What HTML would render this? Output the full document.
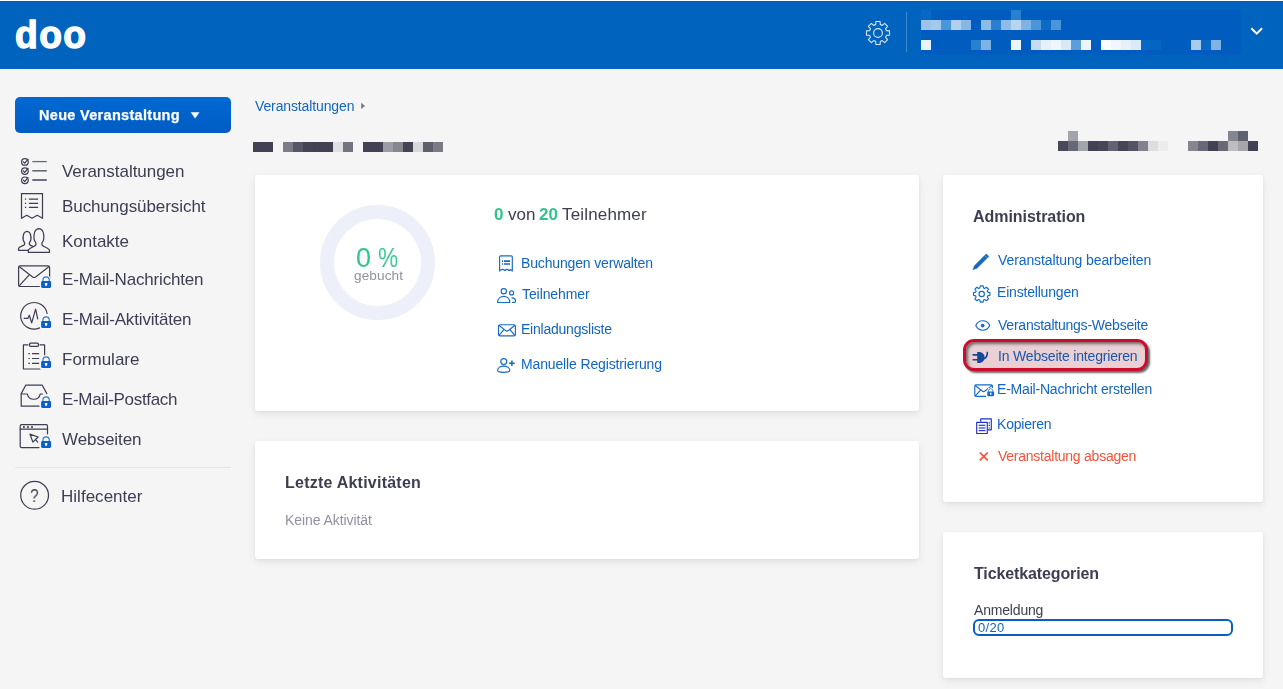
<!DOCTYPE html>
<html lang="de"><head><meta charset="utf-8"><title>doo</title>
<style>
*{box-sizing:border-box;margin:0;padding:0}
html,body{width:1283px;height:689px;overflow:hidden}
body{background:#f5f5f5;font-family:"Liberation Sans",Arial,sans-serif;position:relative}
.t{position:absolute;white-space:nowrap;line-height:20px;display:block;will-change:transform}
.abs{position:absolute}
h2.t{font-size:16px;margin:0}
a.t{text-decoration:none;cursor:pointer}
svg{position:absolute;overflow:visible}
.hdr{position:absolute;left:0;top:1px;width:1283px;height:68px;background:#0063bd;border-top:1px solid #0059b5}
.topline{position:absolute;left:0;top:0;width:1283px;height:1px;background:#fff}
.card{position:absolute;background:#fff;border-radius:3px;box-shadow:0 3px 9px rgba(0,0,0,.08),0 1px 3px rgba(0,0,0,.04)}
.btn{position:absolute;left:15px;top:97px;width:216px;height:36px;border-radius:5px;background:linear-gradient(#0069d2,#005cc3)}
.px{position:absolute;width:10px;height:10px}
.logo{position:absolute;left:15px;top:5px;font-weight:700;font-size:39px;line-height:60px;color:#fff;-webkit-text-stroke:1.3px #fff;letter-spacing:1.5px;transform:scaleX(.955);transform-origin:0 0;display:block}
</style></head>
<body>
<header><div class="topline"></div><div class="hdr"></div><span class="logo">doo</span><svg style="left:864px;top:19px" width="28" height="28" viewBox="864 19 28 28" ><path d="M875.68 24.62L875.91 21.49L880.09 21.49L880.32 24.62A8.70 8.70 0 0 1 882.29 25.43L882.29 25.43L884.66 23.38L887.62 26.34L885.57 28.71A8.70 8.70 0 0 1 886.38 30.68L886.38 30.68L889.51 30.91L889.51 35.09L886.38 35.32A8.70 8.70 0 0 1 885.57 37.29L885.57 37.29L887.62 39.66L884.66 42.62L882.29 40.57A8.70 8.70 0 0 1 880.32 41.38L880.32 41.38L880.09 44.51L875.91 44.51L875.68 41.38A8.70 8.70 0 0 1 873.71 40.57L873.71 40.57L871.34 42.62L868.38 39.66L870.43 37.29A8.70 8.70 0 0 1 869.62 35.32L869.62 35.32L866.49 35.09L866.49 30.91L869.62 30.68A8.70 8.70 0 0 1 870.43 28.71L870.43 28.71L868.38 26.34L871.34 23.38L873.71 25.43A8.70 8.70 0 0 1 875.68 24.62Z" fill="none" stroke="#d9e8f7" stroke-width="1.1" stroke-linejoin="round"/><circle cx="878" cy="33" r="4.4" fill="none" stroke="#d9e8f7" stroke-width="1.1"/></svg><div class="abs" style="left:906px;top:12px;width:1px;height:40px;background:#3f88d0"></div><div class="abs" style="left:921px;top:10px;width:320px;height:45px;background:#005cbf"></div><i class="px" style="left:921px;top:10px;background:#0868c6"></i><i class="px" style="left:1011px;top:10px;background:#2a80d0"></i><i class="px" style="left:921px;top:20px;background:#9cc4ea"></i><i class="px" style="left:931px;top:20px;background:#a5c9eb"></i><i class="px" style="left:941px;top:20px;background:#4a96d8"></i><i class="px" style="left:951px;top:20px;background:#b0d0ee"></i><i class="px" style="left:961px;top:20px;background:#86b7e5"></i><i class="px" style="left:981px;top:20px;background:#8cbbe6"></i><i class="px" style="left:991px;top:20px;background:#2a80d0"></i><i class="px" style="left:1001px;top:20px;background:#8fbce7"></i><i class="px" style="left:1011px;top:20px;background:#b9d4ef"></i><i class="px" style="left:1021px;top:20px;background:#7fb3e3"></i><i class="px" style="left:1031px;top:20px;background:#4a96d8"></i><i class="px" style="left:1041px;top:20px;background:#0a6ac6"></i><i class="px" style="left:1051px;top:20px;background:#4a96d8"></i><i class="px" style="left:921px;top:40px;background:#eaf2fa"></i><i class="px" style="left:971px;top:40px;background:#2a80d0"></i><i class="px" style="left:981px;top:40px;background:#7fb3e3"></i><i class="px" style="left:1011px;top:40px;background:#eef4fb"></i><i class="px" style="left:1031px;top:40px;background:#c5dcf1"></i><i class="px" style="left:1041px;top:40px;background:#e6f0f9"></i><i class="px" style="left:1051px;top:40px;background:#eef5fb"></i><i class="px" style="left:1061px;top:40px;background:#d9e8f6"></i><i class="px" style="left:1071px;top:40px;background:#5a9fdc"></i><i class="px" style="left:1081px;top:40px;background:#eef4fb"></i><i class="px" style="left:1101px;top:40px;background:#fbfdff"></i><i class="px" style="left:1111px;top:40px;background:#f0f6fc"></i><i class="px" style="left:1121px;top:40px;background:#e8f1fa"></i><i class="px" style="left:1131px;top:40px;background:#dceaf7"></i><i class="px" style="left:1141px;top:40px;background:#0868c6"></i><i class="px" style="left:1151px;top:40px;background:#0565c2"></i><i class="px" style="left:1191px;top:40px;background:#a8cbec"></i><i class="px" style="left:1201px;top:40px;background:#0868c6"></i><i class="px" style="left:1211px;top:40px;background:#7fb3e3"></i><svg style="left:1248px;top:24px" width="18" height="14" viewBox="1248 24 18 14" ><path d="M1251.3 28.3 L1256.7 33.7 L1262.1 28.3" fill="none" stroke="#fff" stroke-width="2" stroke-linecap="butt" stroke-linejoin="miter"/></svg>
</header>
<nav><div class="btn"></div><svg style="left:189px;top:110px" width="12" height="10" viewBox="189 110 12 10" ><path d="M190.7 112.2 H199.5 L195.1 118.4 Z" fill="#fff"/></svg><svg style="left:18px;top:155px" width="32" height="30" viewBox="18 155 32 30" ><circle cx="24.9" cy="161.9" r="3.3" fill="none" stroke="#3d3e52" stroke-width="1.22" stroke-linecap="round" stroke-linejoin="round" stroke-width="1.1"/><path d="M23.4 161.8 l1.3 1.4 l3.3 -3.9" fill="none" stroke="#3d3e52" stroke-width="1.22" stroke-linecap="round" stroke-linejoin="round" stroke-width="1.1"/><path d="M32.3 161.6 H46.8" fill="none" stroke="#6b6c7b" stroke-width="1.3"/><circle cx="24.9" cy="171.1" r="3.3" fill="none" stroke="#3d3e52" stroke-width="1.22" stroke-linecap="round" stroke-linejoin="round" stroke-width="1.1"/><path d="M23.4 171.0 l1.3 1.4 l3.3 -3.9" fill="none" stroke="#3d3e52" stroke-width="1.22" stroke-linecap="round" stroke-linejoin="round" stroke-width="1.1"/><path d="M32.3 170.8 H46.8" fill="none" stroke="#5e5f6f" stroke-width="1.5"/><circle cx="24.9" cy="180.3" r="3.3" fill="none" stroke="#3d3e52" stroke-width="1.22" stroke-linecap="round" stroke-linejoin="round" stroke-width="1.1"/><path d="M23.4 180.2 l1.3 1.4 l3.3 -3.9" fill="none" stroke="#3d3e52" stroke-width="1.22" stroke-linecap="round" stroke-linejoin="round" stroke-width="1.1"/><path d="M32.3 180.0 H46.8" fill="none" stroke="#55566a" stroke-width="1.7"/></svg><svg style="left:18px;top:190px" width="30" height="32" viewBox="18 190 30 32" ><path d="M21.5 193.6 H42.5 V218.3 L37.25 215.3 L32 218.3 L26.75 215.3 L21.5 218.3 Z" fill="none" stroke="#3d3e52" stroke-width="1.22" stroke-linecap="round" stroke-linejoin="round"/><path d="M28.9 199.2 H38.1 M24.9 199.2 H26.2" fill="none" stroke="#3d3e52" stroke-width="1.25"/><path d="M28.9 203.3 H38.1 M24.9 203.3 H26.2" fill="none" stroke="#3d3e52" stroke-width="1.25"/><path d="M28.9 207.3 H38.1 M24.9 207.3 H26.2" fill="none" stroke="#3d3e52" stroke-width="1.25"/></svg><svg style="left:16px;top:226px" width="36" height="30" viewBox="16 226 36 30" ><g fill="none" stroke="#3d3e52" stroke-width="1.22" stroke-linecap="round" stroke-linejoin="round"><path transform="translate(27 250.3) scale(0.8) translate(-38.9 -252.4)" stroke-width="1.6" d="M35.9 242.8 C32.8 239.6 33.2 228.9 38.9 228.7 C44.6 228.9 45 239.6 41.9 242.8 L41.9 244.8 C42.9 247.3 49.5 247.5 49.5 250.6 L49.5 252.4 L28.3 252.4 L28.3 250.6 C28.3 247.5 34.9 247.3 35.9 244.8 Z"/><path fill="#f5f5f5" d="M35.9 242.8 C32.8 239.6 33.2 228.9 38.9 228.7 C44.6 228.9 45 239.6 41.9 242.8 L41.9 244.8 C42.9 247.3 49.5 247.5 49.5 250.6 L49.5 252.4 L28.3 252.4 L28.3 250.6 C28.3 247.5 34.9 247.3 35.9 244.8 Z"/></g></svg><svg style="left:16px;top:263px" width="38" height="28" viewBox="16 263 38 28" ><rect x="18.6" y="265.9" width="31" height="20.6" rx="1.6" fill="none" stroke="#3d3e52" stroke-width="1.22" stroke-linecap="round" stroke-linejoin="round"/><path d="M19.4 266.8 L32.6 277 Q34.1 278 35.6 277 L48.8 266.8 M19.4 285.6 L28.8 275.4" fill="none" stroke="#3d3e52" stroke-width="1.22" stroke-linecap="round" stroke-linejoin="round"/><rect x="39.80" y="279.70" width="12.60" height="9.50" rx="2.20" fill="#f5f5f5"/><path d="M42.95 281.60 V280.00 A3.15 3.15 0 0 1 49.25 280.00 V281.60" fill="#f5f5f5" stroke="#f5f5f5" stroke-width="3.60"/><path d="M42.95 281.60 V280.00 A3.15 3.15 0 0 1 49.25 280.00 V281.60" fill="none" stroke="#2a78d2" stroke-width="1.15"/><rect x="41.10" y="281.00" width="10.00" height="6.90" rx="1.30" fill="#0a60c6"/><path d="M44.80 283.00 H47.40 L47.00 285.80 H45.20 Z" fill="#fff"/></svg><svg style="left:18px;top:300px" width="36" height="32" viewBox="18 300 36 32" ><path d="M47.1 313.5 A13.3 13.3 0 1 0 39.6 327.9" fill="none" stroke="#3d3e52" stroke-width="1.22" stroke-linecap="round" stroke-linejoin="round"/><path d="M24.2 318.4 H27.8 L29.3 315.3 L31.7 322.9 L35.6 309.2 L37.7 318.8" fill="none" stroke="#3d3e52" stroke-width="1.22" stroke-linecap="round" stroke-linejoin="round" stroke-width="1.15"/><path d="M42.95 321.60 V320.00 A3.15 3.15 0 0 1 49.25 320.00 V321.60" fill="none" stroke="#2a78d2" stroke-width="1.15"/><rect x="41.10" y="321.00" width="10.00" height="6.90" rx="1.30" fill="#0a60c6"/><path d="M44.80 323.00 H47.40 L47.00 325.80 H45.20 Z" fill="#fff"/></svg><svg style="left:20px;top:341px" width="34" height="32" viewBox="20 341 34 32" ><path d="M28 344.8 H23.4 V369 H40 M40 344.8 H44.6 V355.6" fill="none" stroke="#3d3e52" stroke-width="1.22" stroke-linecap="round" stroke-linejoin="round"/><rect x="29.6" y="343.2" width="8.8" height="3.2" rx="0.9" fill="none" stroke="#3d3e52" stroke-width="1.22" stroke-linecap="round" stroke-linejoin="round"/><path d="M32 353.6 H39.2 M28.4 353.6 H29.9" fill="none" stroke="#3d3e52" stroke-width="1.2"/><path d="M32 358.5 H39.2 M28.4 358.5 H29.9" fill="none" stroke="#3d3e52" stroke-width="1.2"/><path d="M32 363.4 H39.2 M28.4 363.4 H29.9" fill="none" stroke="#3d3e52" stroke-width="1.2"/><rect x="39.80" y="359.70" width="12.60" height="9.50" rx="2.20" fill="#f5f5f5"/><path d="M42.95 361.60 V360.00 A3.15 3.15 0 0 1 49.25 360.00 V361.60" fill="#f5f5f5" stroke="#f5f5f5" stroke-width="3.60"/><path d="M42.95 361.60 V360.00 A3.15 3.15 0 0 1 49.25 360.00 V361.60" fill="none" stroke="#2a78d2" stroke-width="1.15"/><rect x="41.10" y="361.00" width="10.00" height="6.90" rx="1.30" fill="#0a60c6"/><path d="M44.80 363.00 H47.40 L47.00 365.80 H45.20 Z" fill="#fff"/></svg><svg style="left:18px;top:383px" width="36" height="28" viewBox="18 383 36 28" ><path d="M46.8 393.6 L42.3 385.2 H25.7 L21.2 393.6 V406.2 H39" fill="none" stroke="#3d3e52" stroke-width="1.22" stroke-linecap="round" stroke-linejoin="round"/><path d="M21.2 394 H27.4 C28.6 401 39 401 40.2 394 H42.6" fill="none" stroke="#3d3e52" stroke-width="1.22" stroke-linecap="round" stroke-linejoin="round"/><path d="M42.95 401.60 V400.00 A3.15 3.15 0 0 1 49.25 400.00 V401.60" fill="none" stroke="#2a78d2" stroke-width="1.15"/><rect x="41.10" y="401.00" width="10.00" height="6.90" rx="1.30" fill="#0a60c6"/><path d="M44.80 403.00 H47.40 L47.00 405.80 H45.20 Z" fill="#fff"/></svg><svg style="left:18px;top:422px" width="36" height="30" viewBox="18 422 36 30" ><path d="M47.5 433.8 V426 Q47.5 424.6 46.1 424.6 H21.6 Q20.2 424.6 20.2 426 V446.2 Q20.2 447.6 21.6 447.6 H39" fill="none" stroke="#3d3e52" stroke-width="1.22" stroke-linecap="round" stroke-linejoin="round"/><path d="M20.2 429.2 H47.5" fill="none" stroke="#3d3e52" stroke-width="1.22" stroke-linecap="round" stroke-linejoin="round"/><rect x="23.0" y="426.1" width="1.8" height="1.8" rx="0.4" fill="#3d3e52"/><rect x="27.0" y="426.1" width="1.8" height="1.8" rx="0.4" fill="#3d3e52"/><rect x="31.1" y="426.1" width="1.8" height="1.8" rx="0.4" fill="#3d3e52"/><path d="M30 434.2 L38.1 437 L32.9 442.1 Z M35.6 439.6 L37.7 442.1" fill="none" stroke="#3d3e52" stroke-width="1.22" stroke-linecap="round" stroke-linejoin="round" stroke-width="1.15"/><path d="M42.95 441.60 V440.00 A3.15 3.15 0 0 1 49.25 440.00 V441.60" fill="none" stroke="#2a78d2" stroke-width="1.15"/><rect x="41.10" y="441.00" width="10.00" height="6.90" rx="1.30" fill="#0a60c6"/><path d="M44.80 443.00 H47.40 L47.00 445.80 H45.20 Z" fill="#fff"/></svg><div class="abs" style="left:15px;top:467px;width:216px;height:1px;background:#dfe7f2"></div><svg style="left:18px;top:479px" width="34" height="34" viewBox="18 479 34 34" ><circle cx="34.6" cy="495.3" r="13.9" fill="none" stroke="#3d3e52" stroke-width="1.22" stroke-linecap="round" stroke-linejoin="round"/></svg>
<span class="t" style="left:38.7px;top:105.18px;font-size:14.5px;color:#fff;font-weight:700;letter-spacing:0.307px;-webkit-text-stroke:.25px #fff;">Neue Veranstaltung</span>
<a class="t" style="left:62.0px;top:162.11px;font-size:17px;color:#3d3e52;letter-spacing:-0.028px;">Veranstaltungen</a>
<a class="t" style="left:62.0px;top:197.11px;font-size:17px;color:#3d3e52;letter-spacing:-0.068px;">Buchungsübersicht</a>
<a class="t" style="left:62.0px;top:232.11px;font-size:17px;color:#3d3e52;letter-spacing:-0.016px;">Kontakte</a>
<a class="t" style="left:62.0px;top:270.11px;font-size:17px;color:#3d3e52;letter-spacing:-0.179px;">E-Mail-Nachrichten</a>
<a class="t" style="left:62.0px;top:310.11px;font-size:17px;color:#3d3e52;letter-spacing:-0.163px;">E-Mail-Aktivitäten</a>
<a class="t" style="left:62.0px;top:350.11px;font-size:17px;color:#3d3e52;">Formulare</a>
<a class="t" style="left:62.0px;top:390.11px;font-size:17px;color:#3d3e52;letter-spacing:-0.320px;">E-Mail-Postfach</a>
<a class="t" style="left:62.0px;top:430.11px;font-size:17px;color:#3d3e52;letter-spacing:-0.064px;">Webseiten</a>
<a class="t" style="left:61.0px;top:487.11px;font-size:17px;color:#3d3e52;letter-spacing:0.023px;">Hilfecenter</a>
<a class="t" style="left:30.0px;top:485.94px;font-size:17.5px;color:#3d3e52;transform:scaleX(.9);transform-origin:0 0;">?</a>
</nav>
<main><svg style="left:360px;top:101px" width="8" height="10" viewBox="360 101 8 10" ><path d="M361.2 102.8 L365 105.9 L361.2 109 Z" fill="#77787f"/></svg><i class="px" style="left:253px;top:142px;background:#414354"></i><i class="px" style="left:263px;top:142px;background:#414354"></i><i class="px" style="left:283px;top:142px;background:#7d7d8a"></i><i class="px" style="left:293px;top:142px;background:#555766"></i><i class="px" style="left:303px;top:142px;background:#434555"></i><i class="px" style="left:313px;top:142px;background:#414354"></i><i class="px" style="left:323px;top:142px;background:#414354"></i><i class="px" style="left:333px;top:142px;background:#e0e0e2"></i><i class="px" style="left:343px;top:142px;background:#727481"></i><i class="px" style="left:363px;top:142px;background:#414354"></i><i class="px" style="left:373px;top:142px;background:#414354"></i><i class="px" style="left:383px;top:142px;background:#9c9ca6"></i><i class="px" style="left:393px;top:142px;background:#868691"></i><i class="px" style="left:403px;top:142px;background:#434555"></i><i class="px" style="left:413px;top:142px;background:#d9d9db"></i><i class="px" style="left:423px;top:142px;background:#5d5f6d"></i><i class="px" style="left:433px;top:142px;background:#7b7b88"></i><i class="px" style="left:1058px;top:141px;background:#484a5a"></i><i class="px" style="left:1068px;top:141px;background:#676776"></i><i class="px" style="left:1078px;top:141px;background:#a3a3ab"></i><i class="px" style="left:1088px;top:141px;background:#414354"></i><i class="px" style="left:1098px;top:141px;background:#454757"></i><i class="px" style="left:1108px;top:141px;background:#626372"></i><i class="px" style="left:1118px;top:141px;background:#454757"></i><i class="px" style="left:1128px;top:141px;background:#525463"></i><i class="px" style="left:1138px;top:141px;background:#82828e"></i><i class="px" style="left:1148px;top:141px;background:#dddddf"></i><i class="px" style="left:1158px;top:141px;background:#ececec"></i><i class="px" style="left:1188px;top:141px;background:#85868f"></i><i class="px" style="left:1198px;top:141px;background:#686876"></i><i class="px" style="left:1208px;top:141px;background:#414354"></i><i class="px" style="left:1218px;top:141px;background:#686876"></i><i class="px" style="left:1228px;top:141px;background:#bdbdc2"></i><i class="px" style="left:1238px;top:141px;background:#a5a5ac"></i><i class="px" style="left:1248px;top:141px;background:#414354"></i><i class="px" style="left:1068px;top:131px;background:#a3a3ab"></i><i class="px" style="left:1228px;top:131px;background:#85868f"></i><i class="px" style="left:1238px;top:131px;background:#5f6170"></i><div class="card" style="left:255px;top:175px;width:664px;height:235.6px"></div><div class="card" style="left:255px;top:441px;width:664px;height:117.5px"></div><div class="card" style="left:943px;top:175px;width:320px;height:327px"></div><div class="card" style="left:943px;top:532px;width:320px;height:145.5px"></div><svg style="left:320px;top:205px" width="116" height="116" viewBox="320 205 116 116" ><circle cx="377.5" cy="262.6" r="50.5" fill="none" stroke="#edf0f8" stroke-width="14"/></svg><svg style="left:496px;top:253px" width="20" height="22" viewBox="496 253 20 22" ><path d="M499.6 256.9 Q499.6 255.8 500.7 255.8 H511.2 Q512.3 255.8 512.3 256.9 V271.1 Q511.2 269.3 510.18 269.6 Q509.1 271.4 508.07 269.6 Q507 269.3 505.95 269.6 Q504.9 271.4 503.83 269.6 Q502.8 269.3 501.72 269.6 Q500.6 269.4 499.6 271.1 Z" fill="none" stroke="#1869c3" stroke-width="1.15" stroke-linecap="round" stroke-linejoin="round" stroke-width="1.25"/><path d="M504 261.2 H510 M502 261.2 H503" fill="none" stroke="#1869c3" stroke-width="1.7"/><path d="M504 264.0 H510 M502 264.0 H503" fill="none" stroke="#1869c3" stroke-width="1.7"/></svg><svg style="left:495px;top:287px" width="24" height="18" viewBox="495 287 24 18" ><circle cx="503.8" cy="291.2" r="2.65" fill="none" stroke="#1869c3" stroke-width="1.15" stroke-linecap="round" stroke-linejoin="round"/><path d="M497.6 302.5 C497.6 294.4 509.8 294.4 509.8 302.5 Z" fill="none" stroke="#1869c3" stroke-width="1.15" stroke-linecap="round" stroke-linejoin="round"/><circle cx="511.6" cy="292.9" r="2.0" fill="none" stroke="#1869c3" stroke-width="1.15" stroke-linecap="round" stroke-linejoin="round"/><path d="M512 297.8 C514.5 297.8 515.6 299.6 515.6 301.1 Q515.6 302.4 514.4 302.4 H512.6" fill="none" stroke="#1869c3" stroke-width="1.15" stroke-linecap="round" stroke-linejoin="round"/></svg><svg style="left:496px;top:322px" width="22" height="16" viewBox="496 322 22 16" ><rect x="498.5" y="324.7" width="16.9" height="11.2" rx="1.5" fill="none" stroke="#1869c3" stroke-width="1.15" stroke-linecap="round" stroke-linejoin="round" stroke-width="1.3"/><path d="M499.2 325.5 L505.6 330.6 Q506.95 331.5 508.3 330.6 L514.7 325.5 M499.2 335.1 L503.9 329.6 M514.7 335.1 L510 329.6" fill="none" stroke="#1869c3" stroke-width="1.15" stroke-linecap="round" stroke-linejoin="round"/></svg><svg style="left:495px;top:356px" width="24" height="20" viewBox="495 356 24 20" ><circle cx="503.8" cy="361.6" r="3.0" fill="none" stroke="#1869c3" stroke-width="1.15" stroke-linecap="round" stroke-linejoin="round"/><path d="M497.6 370.6 C497.6 364.6 509.8 364.6 509.8 370.6 C509.8 372.9 497.6 372.9 497.6 370.6 Z" fill="none" stroke="#1869c3" stroke-width="1.15" stroke-linecap="round" stroke-linejoin="round"/><path d="M511.9 360.4 V366 M509.1 363.2 H514.7" fill="none" stroke="#1869c3" stroke-width="1.5"/></svg>
<a class="t" style="left:255.0px;top:96.05px;font-size:14px;color:#1265c2;letter-spacing:-0.122px;">Veranstaltungen</a>
<span class="t" style="left:494.3px;top:205.11px;font-size:17px;color:#31c48d;font-weight:700;">0</span>
<span class="t" style="left:507.7px;top:205.11px;font-size:17px;color:#3d3e52;">von</span>
<span class="t" style="left:539.4px;top:205.11px;font-size:17px;color:#31c48d;font-weight:700;">20</span>
<span class="t" style="left:561.7px;top:205.11px;font-size:17px;color:#3d3e52;letter-spacing:0.160px;">Teilnehmer</span>
<span class="t" style="left:356.0px;top:247.64px;font-size:27px;color:#31c48d;">0</span>
<span class="t" style="left:378.3px;top:247.64px;font-size:27px;color:#31c48d;transform:scaleX(.84);transform-origin:0 0;">%</span>
<span class="t" style="left:353.7px;top:266.29px;font-size:13.6px;color:#9091a0;letter-spacing:0.104px;">gebucht</span>
<a class="t" style="left:521.0px;top:253.05px;font-size:14px;color:#1265c2;letter-spacing:-0.148px;">Buchungen verwalten</a>
<a class="t" style="left:522.0px;top:283.75px;font-size:14px;color:#1265c2;letter-spacing:-0.087px;">Teilnehmer</a>
<a class="t" style="left:521.0px;top:318.95px;font-size:14px;color:#1265c2;letter-spacing:-0.227px;">Einladungsliste</a>
<a class="t" style="left:521.0px;top:354.15px;font-size:14px;color:#1265c2;letter-spacing:-0.141px;">Manuelle Registrierung</a>
<h2 class="t" style="left:284.5px;top:472.76px;font-size:16px;color:#3d3e52;font-weight:700;letter-spacing:0.231px;">Letzte Aktivitäten</h2>
<span class="t" style="left:284.5px;top:510.35px;font-size:14px;color:#9091a0;letter-spacing:-0.074px;">Keine Aktivität</span>
</main>
<aside><svg style="left:971px;top:252px" width="20" height="20" viewBox="971 252 20 20" ><path d="M986.24 253.89 L988.86 256.51 L977.01 268.36 L972.9 269.7 L974.39 265.74 Z" fill="#1869c3" stroke="#1869c3" stroke-width="0.5" stroke-linejoin="round"/><path d="M984.6 255.5 L987.25 258.15" stroke="#fff" stroke-opacity=".55" stroke-width="0.6"/></svg><svg style="left:972px;top:284px" width="20" height="20" viewBox="972 284 20 20" ><path d="M979.84 287.98L980.30 285.82L983.10 285.82L983.56 287.98A6.30 6.30 0 0 1 984.64 288.43L984.64 288.43L986.49 287.22L988.48 289.21L987.27 291.06A6.30 6.30 0 0 1 987.72 292.14L987.72 292.14L989.88 292.60L989.88 295.40L987.72 295.86A6.30 6.30 0 0 1 987.27 296.94L987.27 296.94L988.48 298.79L986.49 300.78L984.64 299.57A6.30 6.30 0 0 1 983.56 300.02L983.56 300.02L983.10 302.18L980.30 302.18L979.84 300.02A6.30 6.30 0 0 1 978.76 299.57L978.76 299.57L976.91 300.78L974.92 298.79L976.13 296.94A6.30 6.30 0 0 1 975.68 295.86L975.68 295.86L973.52 295.40L973.52 292.60L975.68 292.14A6.30 6.30 0 0 1 976.13 291.06L976.13 291.06L974.92 289.21L976.91 287.22L978.76 288.43A6.30 6.30 0 0 1 979.84 287.98Z" fill="none" stroke="#1869c3" stroke-width="1.15" stroke-linecap="round" stroke-linejoin="round" stroke-width="0.95"/><circle cx="981.7" cy="294" r="2.7" fill="none" stroke="#1869c3" stroke-width="1.15" stroke-linecap="round" stroke-linejoin="round" stroke-width="0.95"/></svg><svg style="left:974px;top:318px" width="18" height="15" viewBox="974 318 18 15" ><path d="M975.8 325.5 C978.6 319.2 986.9 319.2 989.7 325.5 C986.9 331.8 978.6 331.8 975.8 325.5 Z" fill="none" stroke="#1869c3" stroke-width="1.15" stroke-linecap="round" stroke-linejoin="round" stroke-width="0.95"/><circle cx="982.7" cy="325.6" r="1.85" fill="#1869c3"/></svg><div class="abs" style="left:962.8px;top:339.2px;width:184.8px;height:32.1px;border:3.3px solid #cf0a2c;border-radius:11px;background:#e8d0d4;box-shadow:2px 2px 2px rgba(0,0,0,.6),inset 2px 2px 3px rgba(0,0,0,.5)"></div><svg style="left:971px;top:350px" width="20" height="15" viewBox="971 350 20 15" ><path d="M977.2 351.9 H978.8 C986.6 351.9 986.6 362.9 978.8 362.9 H977.2 Z M972.5 354.1 H977.4 V355.7 H972.5 Z M972.5 359 H977.4 V360.6 H972.5 Z" fill="#17489b"/><path d="M983.8 358.8 C986.9 358 987.4 355.2 987.4 351.8" fill="none" stroke="#17489b" stroke-width="1.6" stroke-linecap="butt"/></svg><svg style="left:973px;top:383px" width="23" height="17" viewBox="973 383 23 17" ><path d="M992.4 388.6 V386 Q992.4 384.8 991.2 384.8 H976 Q974.8 384.8 974.8 386 V395.2 Q974.8 396.4 976 396.4 H985.6" fill="none" stroke="#1869c3" stroke-width="1.15" stroke-linecap="round" stroke-linejoin="round" stroke-width="1.25"/><path d="M975.5 385.7 L982.6 391.2 Q983.6 391.9 984.6 391.2 L991.7 385.7 M975.5 395.6 L980.6 390.2" fill="none" stroke="#1869c3" stroke-width="1.15" stroke-linecap="round" stroke-linejoin="round"/><rect x="986.42" y="390.62" width="8.57" height="6.46" rx="1.50" fill="#fff"/><path d="M988.56 391.91 V390.82 A2.14 2.14 0 0 1 992.84 390.82 V391.91" fill="#fff" stroke="#fff" stroke-width="2.45"/><path d="M988.56 391.91 V390.82 A2.14 2.14 0 0 1 992.84 390.82 V391.91" fill="none" stroke="#1869c3" stroke-width="0.78"/><rect x="987.30" y="391.50" width="6.80" height="4.69" rx="0.88" fill="#1869c3"/><path d="M989.82 392.86 H991.58 L991.31 394.76 H990.09 Z" fill="#fff"/></svg><svg style="left:974px;top:416px" width="20" height="20" viewBox="974 416 20 20" ><path d="M980.7 421.8 V418.9 H991.3 V429.8 H987.8" fill="none" stroke="#2231c8" stroke-width="1.15" stroke-linejoin="round"/><rect x="976.7" y="422.3" width="10.6" height="11.2" fill="none" stroke="#2231c8" stroke-width="1.15" stroke-linejoin="round" fill="#fff"/><path d="M978.7 425.3 H985.4" fill="none" stroke="#2231c8" stroke-width="1.15" stroke-linejoin="round" stroke-width="1.1"/><path d="M978.7 428 H985.4" fill="none" stroke="#2231c8" stroke-width="1.15" stroke-linejoin="round" stroke-width="1.1"/><path d="M978.7 430.6 H985.4" fill="none" stroke="#2231c8" stroke-width="1.15" stroke-linejoin="round" stroke-width="1.1"/><path d="M988.6 422.8 H990" fill="none" stroke="#2231c8" stroke-width="1.15" stroke-linejoin="round" stroke-width="0.8"/><path d="M988.6 425.4 H990" fill="none" stroke="#2231c8" stroke-width="1.15" stroke-linejoin="round" stroke-width="0.8"/><path d="M988.6 428 H990" fill="none" stroke="#2231c8" stroke-width="1.15" stroke-linejoin="round" stroke-width="0.8"/></svg><svg style="left:978px;top:451px" width="12" height="12" viewBox="978 451 12 12" ><path d="M979.8 452.5 L987.8 460.3 M987.8 452.5 L979.8 460.3" fill="none" stroke="#f4533a" stroke-width="1.7"/></svg><div class="abs" style="left:973px;top:619.4px;width:260px;height:16.4px;border:2px solid #0b5ec0;border-radius:6px;background:#fff"></div>
<h2 class="t" style="left:973.1px;top:206.56px;font-size:16px;color:#3d3e52;font-weight:700;letter-spacing:-0.038px;">Administration</h2>
<a class="t" style="left:997.7px;top:250.15px;font-size:14px;color:#1265c2;letter-spacing:-0.104px;">Veranstaltung bearbeiten</a>
<a class="t" style="left:996.5px;top:282.15px;font-size:14px;color:#1265c2;letter-spacing:-0.189px;">Einstellungen</a>
<a class="t" style="left:997.7px;top:315.05px;font-size:14px;color:#1265c2;letter-spacing:-0.231px;">Veranstaltungs-Webseite</a>
<a class="t" style="left:998.4px;top:345.85px;font-size:14px;color:#1d56a8;letter-spacing:-0.187px;">In Webseite integrieren</a>
<a class="t" style="left:997.3px;top:378.95px;font-size:14px;color:#1265c2;letter-spacing:-0.203px;">E-Mail-Nachricht erstellen</a>
<a class="t" style="left:997.3px;top:413.95px;font-size:14px;color:#1265c2;letter-spacing:-0.207px;">Kopieren</a>
<a class="t" style="left:997.7px;top:446.05px;font-size:14px;color:#f4533a;letter-spacing:-0.247px;">Veranstaltung absagen</a>
<h2 class="t" style="left:973.6px;top:563.56px;font-size:16px;color:#3d3e52;font-weight:700;letter-spacing:-0.125px;">Ticketkategorien</h2>
<span class="t" style="left:973.6px;top:600.45px;font-size:14px;color:#3d3e52;letter-spacing:-0.179px;">Anmeldung</span>
<a class="t" style="left:978.3px;top:617.70px;font-size:13px;color:#1265c2;letter-spacing:0.296px;">0/20</a>
</aside>
</body></html>
